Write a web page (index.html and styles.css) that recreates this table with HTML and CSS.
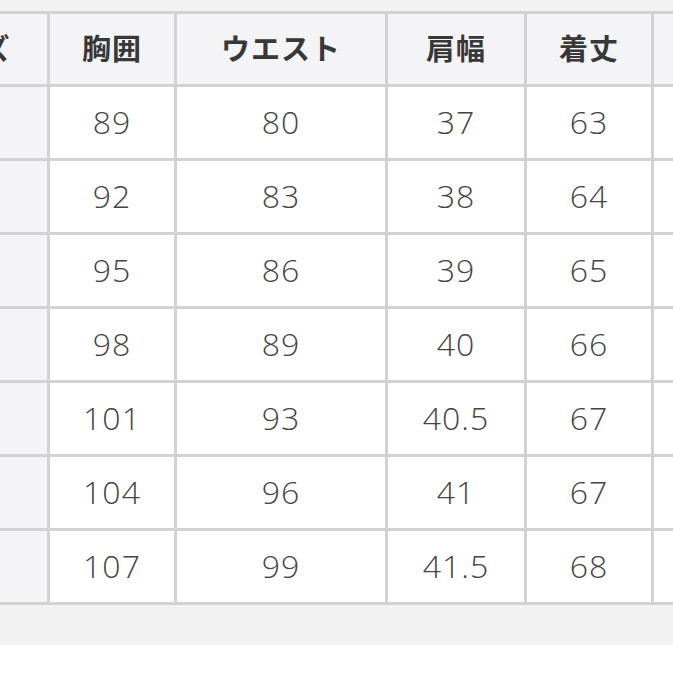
FILE: index.html
```html
<!DOCTYPE html>
<html lang="ja">
<head>
<meta charset="utf-8">
<title>サイズ表</title>
<link rel="stylesheet" href="styles.css">
</head>
<body>
<div class="page">
  <div class="size-table">
    <div class="cell head">サイズ</div>
    <div class="cell head">胸囲</div>
    <div class="cell head">ウエスト</div>
    <div class="cell head">肩幅</div>
    <div class="cell head">着丈</div>
    <div class="cell head">袖丈</div>

    <div class="cell label">S</div>
    <div class="cell num">89</div>
    <div class="cell num">80</div>
    <div class="cell num">37</div>
    <div class="cell num">63</div>
    <div class="cell num">60</div>

    <div class="cell label">M</div>
    <div class="cell num">92</div>
    <div class="cell num">83</div>
    <div class="cell num">38</div>
    <div class="cell num">64</div>
    <div class="cell num">61</div>

    <div class="cell label">L</div>
    <div class="cell num">95</div>
    <div class="cell num">86</div>
    <div class="cell num">39</div>
    <div class="cell num">65</div>
    <div class="cell num">62</div>

    <div class="cell label">XL</div>
    <div class="cell num">98</div>
    <div class="cell num">89</div>
    <div class="cell num">40</div>
    <div class="cell num">66</div>
    <div class="cell num">63</div>

    <div class="cell label">2XL</div>
    <div class="cell num">101</div>
    <div class="cell num">93</div>
    <div class="cell num">40.5</div>
    <div class="cell num">67</div>
    <div class="cell num">64</div>

    <div class="cell label">3XL</div>
    <div class="cell num">104</div>
    <div class="cell num">96</div>
    <div class="cell num">41</div>
    <div class="cell num">67</div>
    <div class="cell num">64</div>

    <div class="cell label">4XL</div>
    <div class="cell num">107</div>
    <div class="cell num">99</div>
    <div class="cell num">41.5</div>
    <div class="cell num">68</div>
    <div class="cell num">65</div>
  </div>
</div>
</body>
</html>
```

FILE: styles.css
```css
html, body {
  margin: 0;
  padding: 0;
  background: #ffffff;
}

.page {
  background: #f2f2f2;
  height: 645px;
  box-sizing: border-box;
  padding-top: 11px;
  overflow: hidden;
}

.size-table {
  display: grid;
  grid-template-columns: 162px 124px 208px 136px 124px 124px;
  grid-template-rows: 70px repeat(7, 71px);
  gap: 3px;
  padding: 3px;
  background: #d2d2d2;
  margin-left: -118px;
  width: max-content;
}

.cell {
  display: flex;
  align-items: center;
  justify-content: center;
  box-sizing: border-box;
  background: #ffffff;
  color: #444444;
}

.head {
  background: #f4f4f6;
  color: #383838;
  font-family: "Noto Sans CJK JP", "Noto Sans", sans-serif;
  font-weight: 700;
  font-size: 29px;
  letter-spacing: 1px;
  padding-bottom: 5px;
}

.label {
  background: #f4f4f6;
  font-family: "Open Sans", "Liberation Sans", sans-serif;
  font-weight: 300;
  font-size: 30px;
}

.num {
  font-family: "Open Sans", "Liberation Sans", sans-serif;
  font-weight: 300;
  font-size: 32px;
  letter-spacing: 1px;
  padding-bottom: 3px;
}
```
